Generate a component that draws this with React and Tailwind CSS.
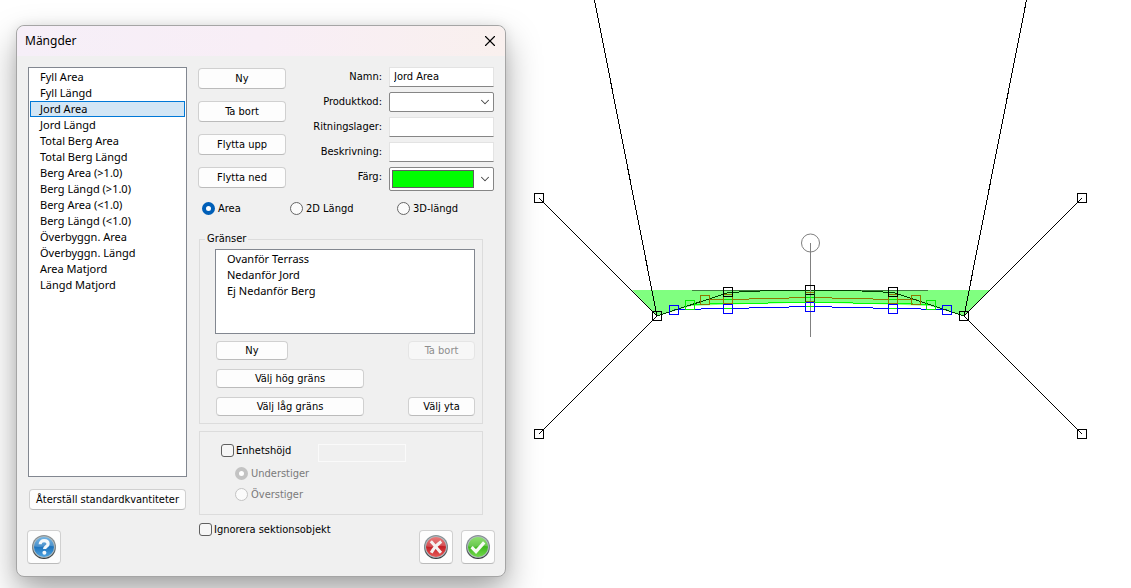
import { useState } from "react";
import clsx from "clsx";
import { ChevronDown, X } from "lucide-react";

const quantities = [
  "Fyll Area",
  "Fyll Längd",
  "Jord Area",
  "Jord Längd",
  "Total Berg Area",
  "Total Berg Längd",
  "Berg Area (>1.0)",
  "Berg Längd (>1.0)",
  "Berg Area (<1.0)",
  "Berg Längd (<1.0)",
  "Överbyggn. Area",
  "Överbyggn. Längd",
  "Area Matjord",
  "Längd Matjord",
];

const limits = ["Ovanför Terrass", "Nedanför Jord", "Ej Nedanför Berg"];

function Button({ className, ...props }) {
  return (
    <button
      type="button"
      className={clsx(
        "flex items-center justify-center rounded border border-[#d0d0d0] border-b-[#bbbbbb] bg-[#fdfdfd] whitespace-nowrap hover:bg-[#e8f2fb] disabled:border-[#e5e5e5] disabled:bg-[#f7f7f7] disabled:text-[#8d8d8d]",
        className
      )}
      {...props}
    />
  );
}

function ListBox({ items, selected, onSelect, label, className }) {
  return (
    <ul
      role="listbox"
      aria-label={label}
      className={clsx("border border-[#828790] bg-white p-px font-['Noto_Sans',sans-serif]", className)}
    >
      {items.map((item) => (
        <li
          key={item}
          role="option"
          aria-selected={item === selected}
          onClick={() => onSelect(item)}
          className={clsx(
            "flex h-4 items-center border px-[9px] leading-4",
            item === selected ? "border-[#0078d7] bg-[#d3e6f5]" : "border-transparent"
          )}
        >
          {item}
        </li>
      ))}
    </ul>
  );
}

function Radio({ label, ...props }) {
  return (
    <label className={clsx("flex h-[13px] items-center gap-[3px] whitespace-nowrap", props.disabled && "text-[#7a7a7a]")}>
      <input
        type="radio"
        className="size-[13px] shrink-0 appearance-none rounded-full border border-[#666666] bg-[#fbfbfb] checked:border-4 checked:border-[#005fb8] checked:bg-white disabled:border-[#c3c3c3]"
        {...props}
      />
      {label}
    </label>
  );
}

function Check({ label }) {
  return (
    <label className="flex h-[13px] items-center gap-[2px] whitespace-nowrap">
      <input
        type="checkbox"
        className="size-[13px] shrink-0 appearance-none rounded-[3px] border border-[#5f5f5f] bg-[#f6f6f6] checked:bg-[#005fb8]"
      />
      {label}
    </label>
  );
}

function TextField(props) {
  return (
    <input
      type="text"
      className="h-5 w-full border border-[#e3e3e3] border-b-[#868686] bg-white px-1 outline-none"
      {...props}
    />
  );
}

function Orb({ id, light, dark, children }) {
  return (
    <svg viewBox="0 0 24 24" className="size-6" aria-hidden="true">
      <defs>
        <linearGradient id={id + "-rim"} x1="0" y1="0" x2="0" y2="1">
          <stop offset="0" stopColor="#8b9296" />
          <stop offset="0.5" stopColor="#7d888c" />
          <stop offset="1" stopColor="#303436" />
        </linearGradient>
        <linearGradient id={id + "-face"} x1="0" y1="0" x2="0" y2="1">
          <stop offset="0" stopColor={light} />
          <stop offset="0.5" stopColor={dark} />
          <stop offset="1" stopColor={light} />
        </linearGradient>
      </defs>
      <circle cx="12" cy="12" r="12" fill={`url(#${id}-rim)`} />
      <circle cx="12" cy="12" r="10.8" fill="#b4c0c4" />
      <circle cx="12" cy="12" r="10" fill={`url(#${id}-face)`} />
      <path d="M2.4 11.5a9.6 9.6 0 0 1 19.2 0c-5-2.2-12 1.8-19.2 0z" fill="#fff" opacity="0.2" />
      {children}
    </svg>
  );
}

// a square grip centred on a section point
function Grip({ x, y, color = "#000" }) {
  return <rect x={x - 4.5} y={y - 4.5} width="9" height="9" fill="none" stroke={color} />;
}

function CrossSection() {
  return (
    <svg
      viewBox="506 0 625 588"
      preserveAspectRatio="xMinYMin meet"
      className="h-screen min-w-0 flex-1"
      role="img"
      aria-label="Sektion"
      fill="none"
      strokeWidth="1"
    >
      <path d="M632 290H990L964 316L930 306L892 304.5L810 302.5L728 304.5L691 306L657 316Z" fill="#80ff80" />
      <g shapeRendering="crispEdges">
        <path d="M594.5 0L657 316M1026.5 0L964 316" stroke="#000" />
        <path d="M539 198L657 316L539 434M1082 198L964 316L1082 434" stroke="#000" />
        <path d="M692 290.5H928" stroke="#408040" />
        <path d="M674.5 309.5L728.5 308.5L810.5 306.5L893.5 308.5L947.5 309.5" stroke="#0000ff" />
        <path d="M690.5 304.5L728.5 303.5L810.5 302.5L893.5 303.5L931.5 304.5" stroke="#00ff00" />
        <path d="M705.5 299.5L728.5 299.5L810.5 297.5L893.5 299.5L916.5 299.5" stroke="#8c7800" />
        <path d="M707 304.5H710M911 304.5H914" stroke="#ff0000" />
        <path d="M657 316L728.5 292.5L770.5 290.5H850.5L893.5 292.5L964 316" stroke="#004000" />
        <path d="M810.5 243V337" stroke="#808080" />
        <Grip x={539} y={198} />
        <Grip x={1082} y={198} />
        <Grip x={539} y={434} />
        <Grip x={1082} y={434} />
        <Grip x={657} y={316} />
        <Grip x={964} y={316} />
        <Grip x={674} y={310} color="#0000ff" />
        <Grip x={947} y={310} color="#0000ff" />
        <Grip x={690} y={305} color="#00f000" />
        <Grip x={931} y={305} color="#00f000" />
        <Grip x={705} y={300} color="#8c7800" />
        <Grip x={916} y={300} color="#8c7800" />
        {[728, 893].map((x) => (
          <g key={x}>
            <Grip x={x} y={304} color="#00f000" />
            <Grip x={x} y={309} color="#0000ff" />
            <path d={`M${x - 4} 308.5H${x + 4}`} stroke="#00f000" />
            <Grip x={x} y={299} color="#8c7800" />
            <Grip x={x} y={292} />
          </g>
        ))}
        <Grip x={810} y={307} color="#0000ff" />
        <Grip x={810} y={302} color="#00f000" />
        <Grip x={810} y={297} color="#8c7800" />
        <Grip x={810} y={290} />
        <path d="M805.5 290V302M814.5 290V302" stroke="#104010" />
        <path d="M805.5 303V311M814.5 303V311" stroke="#0000ff" />
      </g>
      <circle cx="810.5" cy="243" r="9" stroke="#808080" />
    </svg>
  );
}

export default function App() {
  const [quantity, setQuantity] = useState("Jord Area");
  const [limit, setLimit] = useState(null);

  return (
    <div className="flex min-h-screen overflow-hidden bg-white font-['DejaVu_Sans_Condensed',sans-serif] text-[11px] leading-4 text-black">
      <div
        role="dialog"
        aria-labelledby="title"
        className="mt-[25px] ml-4 w-[490px] shrink-0 self-start rounded-lg border border-[#a5a5a5] bg-[#f0f0f0] shadow-[0_16px_34px_rgba(0,0,0,0.34),0_0_12px_rgba(0,0,0,0.08)]"
      >
        <header className="flex h-[30px] items-center justify-between rounded-t-lg bg-linear-to-r from-[#f6eff8] via-[#f8eef6] to-[#f9f0ee] pr-[6px] pl-2">
          <h1 id="title" className="font-['Noto_Sans',sans-serif] text-xs">Mängder</h1>
          <button type="button" aria-label="Stäng" className="pb-px">
            <X size={18} strokeWidth={1.5} />
          </button>
        </header>

        <div className="flex gap-[11px] px-[11px] pt-[11px] pb-3">
          <div className="flex w-[159px] shrink-0 flex-col">
            <ListBox
              label="Mängder"
              items={quantities}
              selected={quantity}
              onSelect={setQuantity}
              className="h-[410px]"
            />
            <Button className="mx-px mt-3 h-[21px]">Återställ standardkvantiteter</Button>
            <Button aria-label="Hjälp" className="mt-5 -ml-px size-[34px]">
              <Orb id="help" light="#4ea3e0" dark="#1e74bd">
                <path d="M8.2 9.3C8.2 6.9 9.8 5.7 12.1 5.7s4 1.2 4 3.2c0 2.6-3.5 2.7-3.5 5.1" fill="none" stroke="#f4f8fb" strokeWidth="3.2" />
                <circle cx="12.4" cy="17.8" r="2" fill="#f4f8fb" />
              </Orb>
            </Button>
          </div>

          <div className="min-w-0 flex-1">
            <div className="flex justify-between">
              <div className="flex w-[88px] flex-col gap-3 pt-px">
                <Button className="h-[21px]">Ny</Button>
                <Button className="h-[21px]">Ta bort</Button>
                <Button className="h-[21px]">Flytta upp</Button>
                <Button className="h-[21px]">Flytta ned</Button>
              </div>
              <div className="grid grid-cols-[auto_105px] gap-x-[7px] gap-y-[5px] text-right leading-5">
                <label htmlFor="name">Namn:</label>
                <TextField id="name" defaultValue="Jord Area" />
                <label htmlFor="product">Produktkod:</label>
                <div className="relative">
                  <select id="product" className="block h-5 w-full appearance-none rounded-xs border border-[#868686] bg-white" />
                  <ChevronDown size={14} strokeWidth={1.8} className="pointer-events-none absolute top-[3px] right-[2px] text-[#444444]" />
                </div>
                <label htmlFor="layer">Ritningslager:</label>
                <TextField id="layer" />
                <label htmlFor="description">Beskrivning:</label>
                <TextField id="description" />
                <label htmlFor="color">Färg:</label>
                <div className="relative">
                  <select id="color" className="block h-6 w-full appearance-none rounded-xs border border-[#868686] bg-white" />
                  <span className="pointer-events-none absolute top-[3px] left-[3px] h-[18px] w-[82px] border border-[#5f5f5f] bg-[#00ff00]" />
                  <ChevronDown size={14} strokeWidth={1.8} className="pointer-events-none absolute top-[5px] right-[2px] text-[#444444]" />
                </div>
              </div>
            </div>

            <div className="mt-[11px] grid grid-cols-[88px_107px_auto] pl-1">
              <Radio name="kind" label="Area" defaultChecked />
              <Radio name="kind" label="2D Längd" />
              <Radio name="kind" label="3D-längd" />
            </div>

            <fieldset className="mt-4 mr-[11px] ml-px border border-[#dcdcdc] pt-[2px] pr-[7px] pb-[7px] pl-[15px]">
              <legend className="-ml-[10px] px-[2px]">Gränser</legend>
              <ListBox label="Gränser" items={limits} selected={limit} onSelect={setLimit} className="h-[85px]" />
              <div className="mt-[7px] flex justify-between pl-px">
                <div className="flex w-[148px] flex-col gap-[9px]">
                  <Button className="h-[19px] w-[72px]">Ny</Button>
                  <Button className="h-[19px]">Välj hög gräns</Button>
                  <Button className="h-[19px]">Välj låg gräns</Button>
                </div>
                <div className="flex w-[67px] flex-col justify-between">
                  <Button className="h-[19px]" disabled>Ta bort</Button>
                  <Button className="h-[19px]">Välj yta</Button>
                </div>
              </div>
            </fieldset>

            <fieldset className="mt-[7px] mr-[11px] ml-px border border-[#dcdcdc] pt-3 pb-[13px] pl-[21px]">
              <div className="flex h-[18px] items-start">
                <div className="w-[97px]">
                  <Check label="Enhetshöjd" />
                </div>
                <input type="text" aria-label="Enhetshöjd" disabled className="h-[18px] w-[88px] border border-[#fafafa] bg-[#f0f0f0]" />
              </div>
              <div className="mt-[5px] flex flex-col gap-2 pl-[14px]">
                <Radio name="side" label="Understiger" defaultChecked disabled />
                <Radio name="side" label="Överstiger" disabled />
              </div>
            </fieldset>

            <div className="mt-2 -mr-px ml-px flex justify-between">
              <Check label="Ignorera sektionsobjekt" />
              <div className="mt-[7px] flex gap-2">
                <Button aria-label="Avbryt" className="size-[34px]">
                  <Orb id="cancel" light="#e65a58" dark="#c42026">
                    <path d="M6.8 6.3C9 8.6 13.5 13.8 17 17.8M17.3 6.6C13.6 9.2 9.6 13.4 7.2 17.8" stroke="#f4f1f0" strokeWidth="3" />
                  </Orb>
                </Button>
                <Button aria-label="OK" className="size-[34px]">
                  <Orb id="ok" light="#73d94c" dark="#3fb81f">
                    <path d="M5.6 12.2L10 16.6L18.2 7.4" fill="none" stroke="#f6fbf4" strokeWidth="3.2" />
                  </Orb>
                </Button>
              </div>
            </div>
          </div>
        </div>
      </div>

      <CrossSection />
    </div>
  );
}
